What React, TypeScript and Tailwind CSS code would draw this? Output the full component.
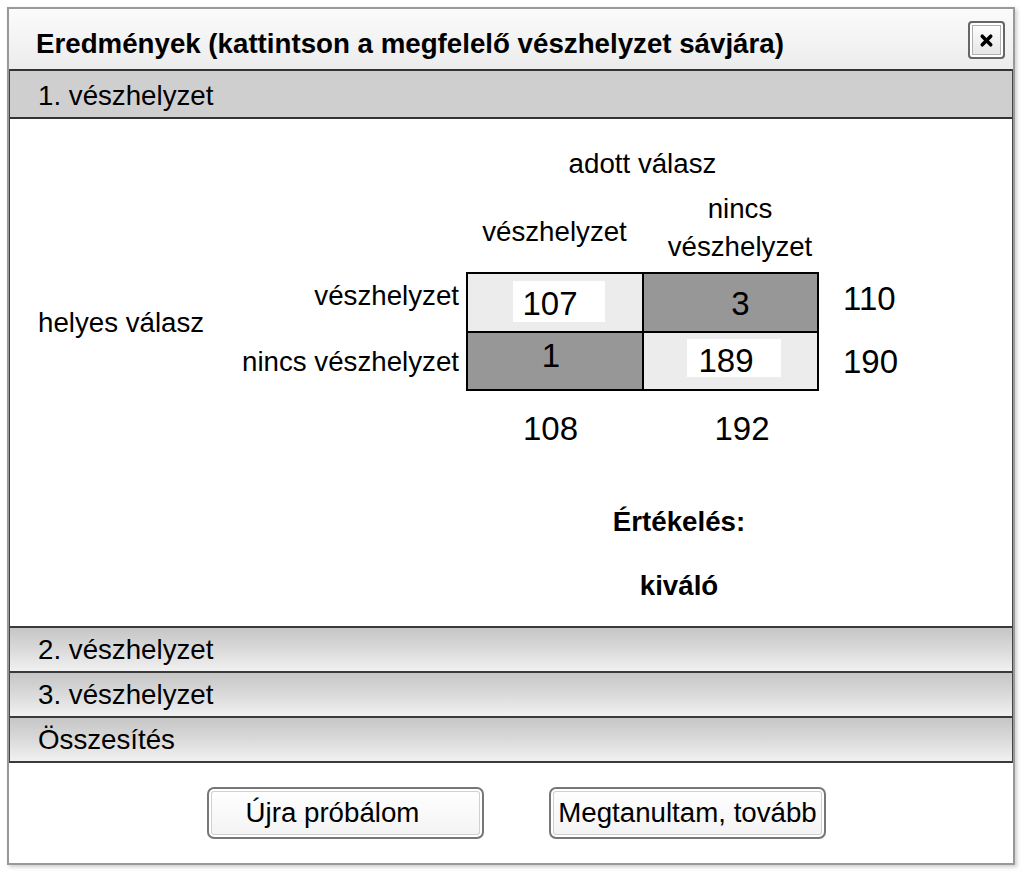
import { X } from "lucide-react";

const sections = ["2. vészhelyzet", "3. vészhelyzet", "Összesítés"];

const SectionBar = ({ label }: { label: string }) => (
  <div className="h-[45px] border-t-2 border-[#3a3a3a] bg-linear-to-b from-[#c6c6c6] via-[#dadada] to-[#f1f1f1] pl-[28px] flex items-center text-[27.7px] leading-none text-black">
    {label}
  </div>
);

const App = () => {
  return (
    <div className="min-h-[874px] bg-white font-['Liberation_Sans',Arial,sans-serif] text-black pt-[7px] pl-[7px]">
      <div className="w-[1008px] h-[858px] border-2 border-[#999] shadow-[2px_2px_4px_rgba(0,0,0,0.2)] flex flex-col bg-white">
        {/* title bar */}
        <div className="h-[60px] bg-linear-to-b from-[#fbfbfb] to-[#ececec] flex items-center pl-[27px] pr-[8px]">
          <h1 className="text-[27.7px] font-bold leading-none pt-[9px] whitespace-nowrap">
            Eredmények (kattintson a megfelelő vészhelyzet sávjára)
          </h1>
          <button className="ml-auto mt-[2px] w-[37px] h-[38px] rounded-[4px] border-2 border-[#666] bg-linear-to-b from-white to-[#e4e4e4] shadow-[inset_0_0_0_2px_#fff,inset_0_0_0_3px_#b0b0b0] flex items-center justify-center">
            <X className="w-[17px] h-[17px]" strokeWidth={5} />
          </button>
        </div>

        {/* accordion */}
        <div className="border-x border-[#444]">
          <div className="h-[50px] border-t-2 border-b-2 border-[#333] bg-[#cfcfcf] pl-[28px] flex items-center text-[27.7px] leading-none pt-[3px]">
            1. vészhelyzet
          </div>

          <div className="h-[507px] pl-[28px] pt-[26px] text-[27.7px]">
            <div className="grid grid-cols-[200px_228px_177px_176px_auto] grid-rows-[38px_89px_60px_59px_57px]">
              <div className="col-start-3 col-span-2 text-center leading-[38px]">adott válasz</div>

              <div className="col-start-3 row-start-2 self-start mt-[30px] text-center leading-[38px]">
                vészhelyzet
              </div>
              <div className="col-start-4 row-start-2 self-start mt-[7px] text-center leading-[38px] pl-[18px]">
                nincs
                <br />
                vészhelyzet
              </div>

              <div className="col-start-1 row-start-3 row-span-2 flex items-center pb-[18px]">helyes válasz</div>
              <div className="col-start-2 row-start-3 flex items-center justify-end pr-[7px] pb-[12px]">vészhelyzet</div>
              <div className="col-start-2 row-start-4 flex items-center justify-end pr-[7px]">nincs vészhelyzet</div>

              <div className="col-start-3 col-span-2 row-start-3 row-span-2 self-start grid grid-cols-[174px_173px] grid-rows-[57px_56px] gap-[2px] p-[2px] bg-black text-[33px] leading-none">
                <div className="bg-[#ececec] flex items-center justify-center pl-[7px] pb-[2px]">
                  <div className="w-[92px] h-[41px] bg-white flex items-center pl-[10px] pt-[4px]">107</div>
                </div>
                <div className="bg-[#979797] flex items-center justify-center pl-[20px] pt-[2px]">3</div>
                <div className="bg-[#979797] flex items-center justify-center pb-[12px] pr-[8px]">1</div>
                <div className="bg-[#ececec] flex items-start justify-center pl-[6px] pt-[6px]">
                  <div className="w-[94px] h-[38px] bg-white flex items-center pl-[12px] pt-[4px]">189</div>
                </div>
              </div>

              <div className="col-start-5 row-start-3 flex items-center pl-[24px] pb-[6px] text-[33px]">110</div>
              <div className="col-start-5 row-start-4 flex items-center pl-[24px] text-[33px]">190</div>

              <div className="col-start-3 row-start-5 self-start mt-[19px] text-center leading-[38px] text-[33px] pr-[8px]">108</div>
              <div className="col-start-4 row-start-5 self-start mt-[19px] text-center leading-[38px] text-[33px] pl-[22px]">192</div>
            </div>

            <div className="mt-[55px] pl-[308px] flex flex-col items-center font-bold leading-[38px] gap-[26px]">
              <div>Értékelés:</div>
              <div>kiváló</div>
            </div>
          </div>

          {sections.map((s) => (
            <SectionBar key={s} label={s} />
          ))}
          <div className="border-t-2 border-[#3a3a3a]" />
        </div>

        {/* footer */}
        <div className="flex-1 flex justify-center items-start gap-[65px] pt-[24px] pl-[11px] text-[27.7px]">
          <button className="w-[277px] h-[52px] rounded-[7px] border-2 border-[#777] bg-linear-to-b from-white to-[#f3f3f3] shadow-[inset_0_0_0_2px_#fff,inset_0_0_0_3px_#d0d0d0] flex items-center justify-center pr-[26px] leading-none">
            Újra próbálom
          </button>
          <button className="w-[277px] h-[52px] rounded-[7px] border-2 border-[#777] bg-linear-to-b from-white to-[#f3f3f3] shadow-[inset_0_0_0_2px_#fff,inset_0_0_0_3px_#d0d0d0] flex items-center justify-center leading-none whitespace-nowrap">
            Megtanultam, tovább
          </button>
        </div>
      </div>
    </div>
  );
};

export default App;
